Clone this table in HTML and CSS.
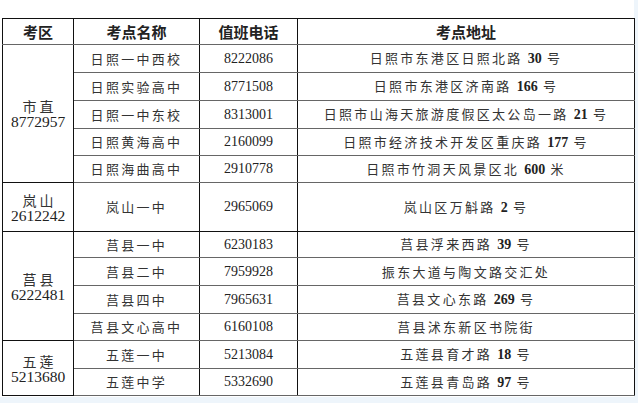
FILE: index.html
```html
<!DOCTYPE html>
<html lang="zh">
<head>
<meta charset="utf-8">
<title>考点</title>
<link rel="stylesheet" href="styles.css">
</head>
<body>
<div class="sheet">
<table class="grid">
<colgroup>
<col class="c1"><col class="c2"><col class="c3"><col class="c4">
</colgroup>
<thead>
<tr class="head"><th>考区</th><th>考点名称</th><th>值班电话</th><th>考点地址</th></tr>
</thead>
<tbody>
<tr class="h28"><td class="area" rowspan="5"><span class="an">市直</span><span class="num">8772957</span></td><td class="name">日照一中西校</td><td class="tel">8222086</td><td class="addr">日照市东港区日照北路 <span class="d">30</span> 号</td></tr>
<tr class="h28"><td class="name">日照实验高中</td><td class="tel">8771508</td><td class="addr">日照市东港区济南路 <span class="d">166</span> 号</td></tr>
<tr class="h28"><td class="name">日照一中东校</td><td class="tel">8313001</td><td class="addr">日照市山海天旅游度假区太公岛一路 <span class="d">21</span> 号</td></tr>
<tr class="h27"><td class="name">日照黄海高中</td><td class="tel">2160099</td><td class="addr">日照市经济技术开发区重庆路 <span class="d">177</span> 号</td></tr>
<tr class="h27"><td class="name">日照海曲高中</td><td class="tel">2910778</td><td class="addr">日照市竹洞天风景区北 <span class="d">600</span> 米</td></tr>
<tr class="tall"><td class="area"><span class="an">岚山</span><span class="num">2612242</span></td><td class="name">岚山一中</td><td class="tel">2965069</td><td class="addr">岚山区万斛路 <span class="d">2</span> 号</td></tr>
<tr class="h26"><td class="area" rowspan="4"><span class="an">莒县</span><span class="num">6222481</span></td><td class="name">莒县一中</td><td class="tel">6230183</td><td class="addr">莒县浮来西路 <span class="d">39</span> 号</td></tr>
<tr class="h28"><td class="name">莒县二中</td><td class="tel">7959928</td><td class="addr">振东大道与陶文路交汇处</td></tr>
<tr class="h28"><td class="name">莒县四中</td><td class="tel">7965631</td><td class="addr">莒县文心东路 <span class="d">269</span> 号</td></tr>
<tr class="h27"><td class="name">莒县文心高中</td><td class="tel">6160108</td><td class="addr">莒县沭东新区书院街</td></tr>
<tr class="h28"><td class="area" rowspan="2"><span class="an">五莲</span><span class="num">5213680</span></td><td class="name">五莲一中</td><td class="tel">5213084</td><td class="addr">五莲县育才路 <span class="d">18</span> 号</td></tr>
<tr class="h27"><td class="name">五莲中学</td><td class="tel">5332690</td><td class="addr">五莲县青岛路 <span class="d">97</span> 号</td></tr>
</tbody>
</table>
</div>
</body>
</html>
```
FILE: styles.css
```css
html, body {
  margin: 0;
  padding: 0;
  background: #eef5fb;
}
.sheet {
  width: 634px;
  height: 397px;
  background: #ffffff;
  padding: 18px 0 0 2px;
  box-sizing: border-box;
}
.grid {
  border-collapse: collapse;
  table-layout: fixed;
  width: 632px;
  font-family: "Noto Sans CJK SC", "Liberation Serif", serif;
  color: #333;
}
.c1 { width: 71px; }
.c2 { width: 126px; }
.c3 { width: 98px; }
.c4 { width: 337px; }
.grid th, .grid td {
  border: 1px solid #111;
  padding: 0;
  text-align: center;
  vertical-align: middle;
}
.grid tbody td {
  border-top: 1px solid #666;
  border-bottom: 1px solid #666;
}
.grid td.area {
  border-top: 1px solid #111;
  border-bottom: 1px solid #111;
}
.grid tr.tall td {
  border-top: 1px solid #111;
  border-bottom: 1px solid #111;
}
.head { height: 26px; }
.head th {
  font-size: 15px;
  font-weight: bold;
  color: #222;
  border-bottom: 1px solid #666;
  line-height: 16px;
}
.h26 { height: 26px; }
.h27 { height: 27px; }
.h28 { height: 28px; }
.tall { height: 49px; }
.name, .addr {
  font-size: 13px;
  letter-spacing: 2.3px;
  line-height: 16px;
  white-space: nowrap;
}
.d, .tel, .num {
  font-family: "Liberation Serif", "Times New Roman", serif;
  letter-spacing: 0;
}
.d { font-size: 14px; font-weight: bold; color: #222; }
.tel { font-size: 14px; color: #222; }
.area { font-size: 14px; line-height: 16px; }
.an {
  display: block;
  letter-spacing: 3px;
  padding-left: 3px;
  line-height: 16px;
}
.num {
  display: block;
  font-size: 15.5px;
  line-height: 15px;
  color: #222;
}
```
